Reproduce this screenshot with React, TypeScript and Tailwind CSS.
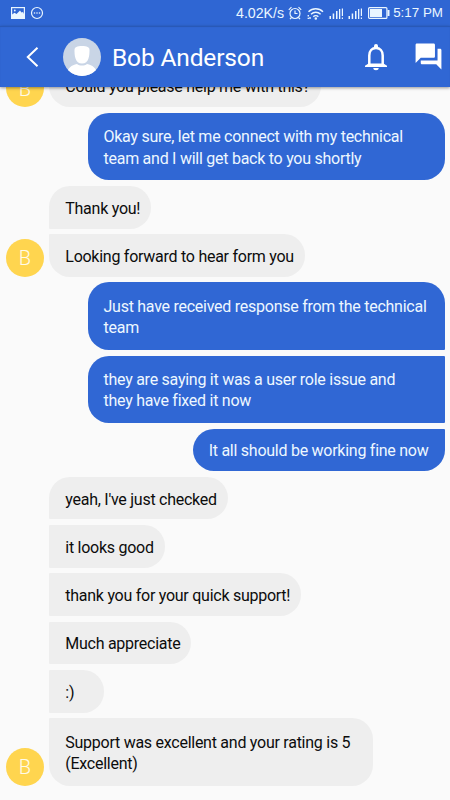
import React from 'react';

interface Message {
  lines: string[];
  mine?: boolean;
  avatar?: boolean;
  width?: string;
  corners: string;
}

const messages: Message[] = [
  { lines: ['Could you please help me with this?'], avatar: true, corners: 'rounded-[21px] rounded-tl-[1px]' },
  { lines: ['Okay sure, let me connect with my technical', 'team and I will get back to you shortly'], mine: true, width: 'w-[357px]', corners: 'rounded-[21px]' },
  { lines: ['Thank you!'], corners: 'rounded-[21px] rounded-bl-[1px]' },
  { lines: ['Looking forward to hear form you'], avatar: true, corners: 'rounded-[21px] rounded-tl-[1px]' },
  { lines: ['Just have received response from the technical', 'team'], mine: true, width: 'w-[357px]', corners: 'rounded-[21px] rounded-br-[1px]' },
  { lines: ['they are saying it was a user role issue and', 'they have fixed it now'], mine: true, width: 'w-[357px]', corners: 'rounded-[21px] rounded-r-[1px]' },
  { lines: ['It all should be working fine now'], mine: true, corners: 'rounded-[21px] rounded-tr-[1px]' },
  { lines: ["yeah, I've just checked"], corners: 'rounded-[21px] rounded-bl-[1px]' },
  { lines: ['it looks good'], corners: 'rounded-[21px] rounded-l-[1px]' },
  { lines: ['thank you for your quick support!'], corners: 'rounded-[21px] rounded-l-[1px]' },
  { lines: ['Much appreciate'], corners: 'rounded-[21px] rounded-l-[1px]' },
  { lines: [':)'], width: 'w-[54.5px]', corners: 'rounded-[21px] rounded-l-[1px]' },
  { lines: ['Support was excellent and your rating is 5', '(Excellent)'], avatar: true, width: 'w-[324px]', corners: 'rounded-[21px] rounded-tl-[1px]' },
];

const Signal = () => (
  <svg width="15" height="13" viewBox="0 0 15 13" fill="currentColor">
    <path d="M0.500 9H2v3H0.500zM3.700 6.500h1.500V12H3.700zM7 4h1.500v8H7zM10 2h1.300v10H10zM12.800 1.500H14V9h-1.200zM12.800 10.500H14V12h-1.200z" />
  </svg>
);

const StatusBar = () => (
  <div className="h-[26px] shrink-0 bg-[#2f66d3] flex items-center text-[#eaf6ff] font-['Liberation_Sans',sans-serif] text-[13.4px]">
    <svg className="ml-[11px]" width="14" height="12" viewBox="0 0 14 12" fill="none">
      <rect x="0.600" y="0.600" width="12.800" height="10.800" stroke="currentColor" strokeWidth="1.200" />
      <path d="M1 11V7.500l2.500-1.700L5.500 7 9 3.500l1.500 2 1.500-.5 1 2V11z" fill="currentColor" />
      <circle cx="3.800" cy="3.500" r="0.900" fill="currentColor" />
    </svg>
    <svg className="ml-[5px]" width="14" height="14" viewBox="0 0 14 14" fill="currentColor">
      <circle cx="7" cy="7" r="5.500" fill="none" stroke="currentColor" strokeWidth="1.200" />
      <circle cx="4.500" cy="7" r="0.800" />
      <circle cx="7" cy="7" r="0.800" />
      <circle cx="9.500" cy="7" r="0.800" />
    </svg>
    <div className="ml-auto mr-[7px] mt-px flex items-center">
      <span className="text-[14.2px]">4.02K/s</span>
      <svg className="ml-1" width="14" height="14" viewBox="0 0 14 14" fill="none" stroke="currentColor" strokeWidth="1.200">
        <circle cx="7" cy="7.500" r="5" />
        <path d="M7 4.500v3h2.500M0.800 3.800l2.700-2.700M13.200 3.800l-2.700-2.700M3.500 11.500 2 13.200M10.500 11.500l1.500 1.700" />
      </svg>
      <svg className="ml-[5px]" width="17" height="13" viewBox="0 0 17 13" fill="none" stroke="currentColor" strokeWidth="1.400">
        <path d="M1.500 4.700c4-4 10.500-4 14.500 0M4 7.300c2.800-2.700 6.800-2.700 9.600 0M6.300 9.700c1.300-1.500 3.700-1.500 5 0" />
        <circle cx="8.800" cy="11.500" r="0.600" />
        <path d="M1.300 8v1.500M3 10v2M1.300 10.800V12" />
      </svg>
      <span className="ml-[5px]"><Signal /></span>
      <span className="ml-1"><Signal /></span>
      <svg className="ml-[5px]" width="22" height="12" viewBox="0 0 22 12" fill="none">
        <rect x="0.600" y="0.600" width="18.300" height="10.800" rx="1" stroke="currentColor" strokeWidth="1.200" />
        <rect x="2" y="2" width="12" height="8" fill="currentColor" />
        <rect x="19.500" y="3" width="2" height="6" fill="currentColor" />
      </svg>
      <span className="ml-[3px]">5:17 PM</span>
    </div>
  </div>
);

const Header = () => (
  <header className="relative z-10 h-[61px] shrink-0 bg-[#3067d4] flex items-center text-white shadow-[0_1px_3px_rgba(0,0,0,0.4),inset_0_1px_1px_rgba(0,0,0,0.15)]">
    <svg className="ml-[26px]" width="13" height="20" viewBox="0 0 13 20" fill="none" stroke="currentColor" strokeWidth="2">
      <path d="M11.500 0.800 1.800 10l9.700 9.200" />
    </svg>
    <svg className="ml-6" width="38" height="38" viewBox="0 0 38 38">
      <defs>
        <clipPath id="face"><circle cx="19" cy="19" r="19" /></clipPath>
      </defs>
      <g clipPath="url(#face)">
        <rect width="38" height="38" fill="#c9d5e6" />
        <path d="M11.500 12c0-3 2.500-4 7.500-4s7.500 1 7.500 4c0 5.500-0.500 13.500-7.500 13.500S11.500 17.500 11.500 12Z" fill="#fff" />
        <path d="M4 36c0.500-6 4.500-9 10-10 2.500 2 7.500 2 10 0 5.500 1 9.500 4 10 10v3H4Z" fill="#fff" />
      </g>
    </svg>
    <h1 className="ml-[11px] mt-[3px] font-['Roboto',sans-serif] text-[24.5px] tracking-[-0.15px] leading-none">Bob Anderson</h1>
    <svg className="ml-auto" width="24" height="28" viewBox="0 0 24 28" fill="none">
      <path d="M5.300 22v-9.500C5.300 8 8 5 12 5s6.700 3 6.700 7.500V22" stroke="currentColor" strokeWidth="2.500" />
      <path d="M10 5V3a2 2 0 0 1 4 0v2zM1 24v-1.300L4.500 20.500h15L23 22.700V24zM9.300 25h5.400c0 1.300-1.100 2.300-2.700 2.300S9.300 26.300 9.300 25z" fill="currentColor" />
    </svg>
    <svg className="ml-[25px] mr-[6px]" width="31" height="31" viewBox="0 0 24 24" fill="currentColor">
      <path d="M21 6h-2v9H6v2c0 .55.45 1 1 1h11l4 4V7c0-.55-.45-1-1-1zm-4 6V3c0-.55-.45-1-1-1H3c-.55 0-1 .45-1 1v14l4-4h10c.55 0 1-.45 1-1z" />
    </svg>
  </header>
);

const Bubble: React.FC<{ message: Message }> = ({ message }) => {
  const { lines, mine, avatar, width = '', corners } = message;
  const height = lines.length > 1 ? 'h-[67.4px]' : 'h-[42.65px]';
  const colors = mine ? 'bg-[#3067d4] text-[#edf7ff] pr-4 ml-auto' : 'bg-[#eeeeee] text-[#0c0c0c] pr-[11px]';
  return (
    <div className="flex items-end shrink-0 pl-[5.7px] pr-[5.5px]">
      {!mine && (
        <div className="w-[43.6px] shrink-0">
          {avatar && (
            <div className="size-[38px] pt-px rounded-full bg-[#ffd54f] text-[#fffbea] font-light text-[20px] flex items-center justify-center">B</div>
          )}
        </div>
      )}
      <div className={`flex flex-col justify-center pl-4 pt-[2px] whitespace-nowrap ${height} ${width} ${colors} ${corners}`}>
        {lines.map((line) => (
          <p key={line} className="leading-[21.3px]">{line}</p>
        ))}
      </div>
    </div>
  );
};

const App = () => (
  <div className="w-full h-screen flex flex-col overflow-hidden bg-[#fafafa] font-['Roboto',sans-serif]">
    <StatusBar />
    <Header />
    <main className="flex-1 min-h-0 overflow-hidden">
      <div className="-mt-[22.4px] flex flex-col gap-[5.65px] text-[16px] tracking-[-0.26px]">
        {messages.map((message) => (
          <Bubble key={message.lines[0]} message={message} />
        ))}
      </div>
    </main>
  </div>
);

export default App;
